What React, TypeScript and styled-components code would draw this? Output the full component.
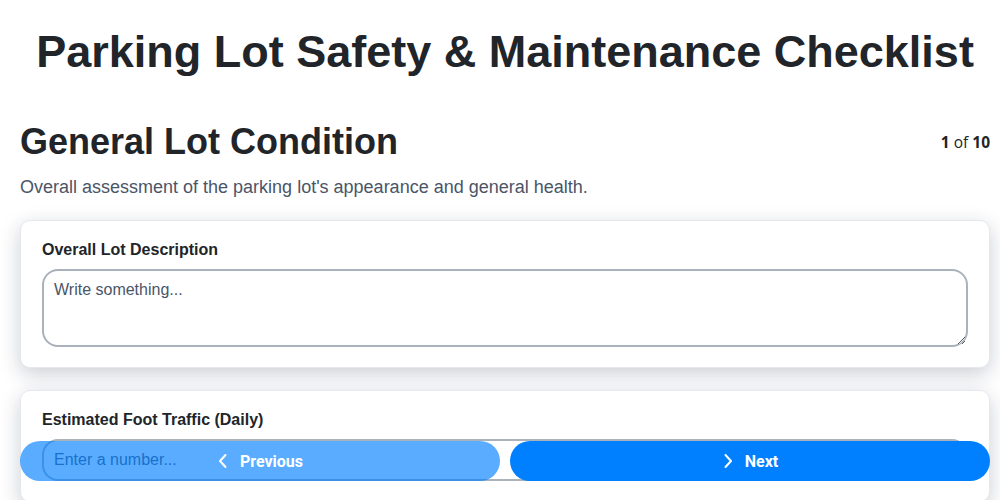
import styled, { createGlobalStyle } from 'styled-components';

const GlobalStyle = createGlobalStyle`
    body {
        margin: 0;
        background: #ffffff;
        font-family: "Liberation Sans", Arial, sans-serif;
        color: #212529;
    }
`;

const Page = styled.div`
    padding: 0 10px 100px 20px;
`;

const Title = styled.h1`
    margin: 24px 0 0;
    text-align: center;
    font-size: 45px;
    font-weight: 700;
    line-height: 56px;
    color: #212529;
`;

const SectionHead = styled.div`
    display: flex;
    justify-content: space-between;
    align-items: flex-start;
    margin-top: 39px;
`;

const SectionTitle = styled.h2`
    margin: 0;
    font-size: 36px;
    line-height: 46px;
    font-weight: 700;
`;

const Counter = styled.div`
    font-family: "Open Sans", sans-serif;
    font-size: 15.5px;
    padding-top: 12px;
    color: #212529;

    b {
        font-weight: 700;
    }
`;

const Description = styled.p`
    margin: 12px 0 22px;
    font-size: 18px;
    color: #4a5568;
`;

const Card = styled.div`
    background: #fff;
    border: 1px solid #e6e8ee;
    border-radius: 10px;
    box-shadow: 0 6px 20px rgba(20, 30, 60, 0.22);
    padding: 20px 21px;
    margin-bottom: 22px;
`;

const Label = styled.label`
    display: block;
    font-size: 16px;
    font-weight: 700;
    margin-bottom: 10px;
    color: #212529;
`;

const TextArea = styled.textarea`
    display: block;
    box-sizing: border-box;
    width: 100%;
    height: 78px;
    border: 2px solid #aab2bb;
    border-radius: 16px;
    padding: 10px 10px 8px;
    font-family: "Liberation Sans", Arial, sans-serif;
    font-size: 16px;
    outline: none;

    &::placeholder {
        color: #4a5568;
    }
`;

const NumberInput = styled.input`
    display: block;
    box-sizing: border-box;
    width: 100%;
    height: 42px;
    border: 2px solid #aab2bb;
    border-radius: 16px;
    padding: 0 10px;
    font-family: "Liberation Sans", Arial, sans-serif;
    font-size: 16px;
    outline: none;

    &::placeholder {
        color: #4a5568;
    }
`;

const NavBar = styled.div`
    position: fixed;
    left: 20px;
    right: 10px;
    bottom: 19px;
    display: flex;
    gap: 10px;
`;

const NavButton = styled.button<{ $faded?: boolean }>`
    flex: 1;
    height: 40px;
    border: none;
    border-radius: 20px;
    background: #0080ff;
    opacity: ${({ $faded }) => ($faded ? 0.65 : 1)};
    color: #fff;
    font-family: Roboto, sans-serif;
    font-size: 16px;
    font-weight: 700;
    display: flex;
    align-items: center;
    justify-content: center;
    gap: 11px;
    cursor: pointer;
`;

const Chevron = ({ left }: { left?: boolean }) => (
    <svg width="12" height="16" viewBox="0 0 12 16" fill="none" stroke="#fff" strokeWidth="2" strokeLinecap="round" strokeLinejoin="round">
        {left ? <polyline points="8.5,2 3,8 8.5,14" /> : <polyline points="3.5,2 9,8 3.5,14" />}
    </svg>
);

const App = () => (
    <>
        <GlobalStyle />
        <Page>
            <Title>Parking Lot Safety &amp; Maintenance Checklist</Title>
            <SectionHead>
                <SectionTitle>General Lot Condition</SectionTitle>
                <Counter><b>1</b> of <b>10</b></Counter>
            </SectionHead>
            <Description>Overall assessment of the parking lot's appearance and general health.</Description>

            <Card>
                <Label>Overall Lot Description</Label>
                <TextArea placeholder="Write something..." />
            </Card>

            <Card>
                <Label>Estimated Foot Traffic (Daily)</Label>
                <NumberInput type="number" placeholder="Enter a number..." />
            </Card>
        </Page>

        <NavBar>
            <NavButton $faded><Chevron left />Previous</NavButton>
            <NavButton><Chevron />Next</NavButton>
        </NavBar>
    </>
);

export default App;
